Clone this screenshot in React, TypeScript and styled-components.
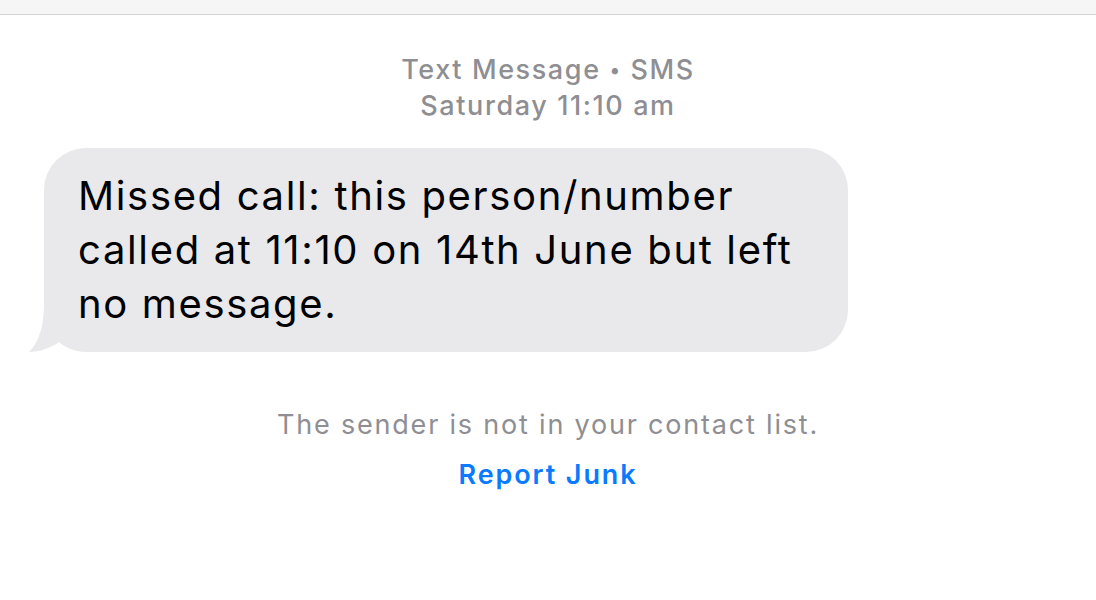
import React from "react";
import styled, { createGlobalStyle } from "styled-components";

const Global = createGlobalStyle`
  html, body { margin: 0; padding: 0; background: #ffffff; }
  body { font-family: Inter, "Noto Sans", "Liberation Sans", sans-serif; -webkit-font-smoothing: antialiased; }
`;

const Page = styled.div`
  width: 1096px;
  height: 600px;
  display: flex;
  flex-direction: column;
  overflow: hidden;
`;

const TopBar = styled.div`
  height: 14px;
  background: #f6f6f6;
  border-bottom: 1px solid #d2d2d2;
  flex-shrink: 0;
`;

const Thread = styled.div`
  display: flex;
  flex-direction: column;
  padding: 37px 0 0 0;
`;

const Header = styled.div`
  display: flex;
  flex-direction: column;
  align-items: center;
  color: #8e8e93;
  font-size: 27px;
  line-height: 35px;
  font-weight: 500;
  letter-spacing: 1.6px;
`;

const Dot = styled.span`
  font-size: 20px;
  vertical-align: 2px;
`;

const Time = styled.span`
  font-weight: 500;
`;

const Row = styled.div`
  display: flex;
  padding: 25px 0 0 44px;
`;

const Bubble = styled.div`
  position: relative;
  width: 804px;
  box-sizing: border-box;
  background: #e9e9eb;
  border-radius: 42px;
  padding: 21px 0 21px 34px;
  color: #000000;
  font-size: 40px;
  line-height: 54px;
  letter-spacing: 1.65px;
  white-space: nowrap;
`;

const BubbleText = styled.span`
  position: relative;
`;

const Tail = styled.svg`
  position: absolute;
  left: -15px;
  bottom: 0;
  width: 60px;
  height: 50px;
`;

const Notice = styled.div`
  display: flex;
  flex-direction: column;
  align-items: center;
  padding-top: 55px;
  gap: 15px;
`;

const NoticeText = styled.div`
  color: #8e8e93;
  font-size: 27px;
  line-height: 35px;
  letter-spacing: 1.8px;
`;

const JunkLink = styled.a`
  color: #0a7aff;
  font-size: 27px;
  line-height: 35px;
  font-weight: 600;
  letter-spacing: 1.9px;
  text-decoration: none;
`;

export default function App() {
  return (
    <>
      <Global />
      <Page>
        <TopBar />
        <Thread>
          <Header>
            <span>
              Text Message <Dot>•</Dot> SMS
            </span>
            <Time>Saturday 11:10 am</Time>
          </Header>
          <Row>
            <Bubble>
              <Tail viewBox="0 0 60 50">
                <path
                  d="M15 0 C15 20 12 38 0 50 C10 50 22 46 30 40 C38 46 48 50 60 50 L60 0 Z"
                  fill="#e9e9eb"
                />
              </Tail>
              <BubbleText>
                Missed call: this person/number
                <br />
                called at 11:10 on 14th June but left
                <br />
                no message.
              </BubbleText>
            </Bubble>
          </Row>
          <Notice>
            <NoticeText>The sender is not in your contact list.</NoticeText>
            <JunkLink href="#">Report Junk</JunkLink>
          </Notice>
        </Thread>
      </Page>
    </>
  );
}
